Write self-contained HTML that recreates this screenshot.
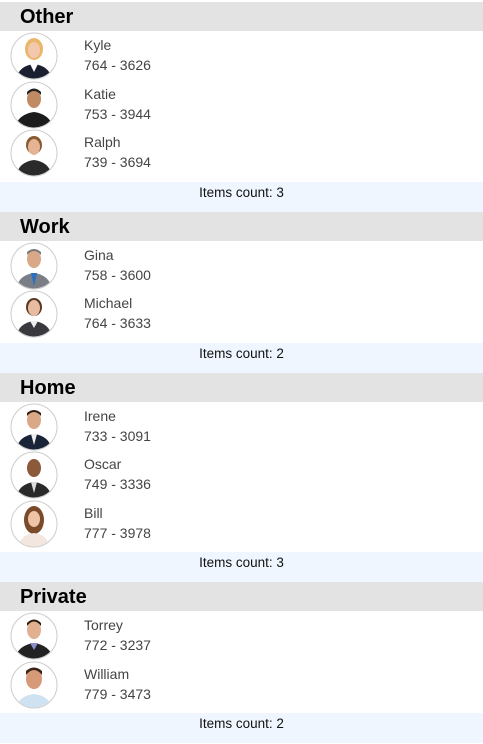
<!DOCTYPE html><html><head><style>
body{margin:0;width:483px;height:744px;overflow:hidden;background:#fff;font-family:"Segoe UI","Liberation Sans",sans-serif}
.top{height:2px}
.h{height:29px;background:#e3e3e3;font-weight:bold;font-size:20px;line-height:31px;padding-left:20px;color:#000}
.r{height:48.5px;position:relative}
.r svg{position:absolute;left:10px;top:1px}
.n{position:absolute;left:84px;top:4px;font-size:14px;line-height:20px;color:#444}
.g{height:5px}
.f{height:30px;background:#eff6ff;text-align:center;font-size:13.5px;line-height:22px;color:#111}
</style></head><body>
<div class="top"></div>
<div class="h">Other</div>
<div class="r"><svg width="48" height="48"><circle cx="24" cy="24" r="23" fill="#fff" stroke="#ccc"/><clipPath id="c"><circle cx="24" cy="24" r="22.5"/></clipPath><g clip-path="url(#c)"><ellipse cx="24" cy="17" rx="9" ry="11" fill="#e9b66a"/><ellipse cx="24" cy="18" rx="6" ry="8" fill="#f2c9ae"/><path d="M6 48 Q8 34 24 32 Q40 34 42 48Z" fill="#1b2030"/><path d="M20 32 L24 40 L28 32Z" fill="#fff"/></g></svg><div class="n">Kyle<br>764 - 3626</div></div>
<div class="r"><svg width="48" height="48"><circle cx="24" cy="24" r="23" fill="#fff" stroke="#ccc"/><g clip-path="url(#c)"><ellipse cx="24" cy="18" rx="7" ry="9" fill="#c08a62"/><path d="M17 14 Q24 6 31 14 L31 11 Q24 4 17 11Z" fill="#222"/><path d="M4 48 Q8 33 24 31 Q40 33 44 48Z" fill="#1c1c1c"/></g></svg><div class="n">Katie<br>753 - 3944</div></div>
<div class="r"><svg width="48" height="48"><circle cx="24" cy="24" r="23" fill="#fff" stroke="#ccc"/><g clip-path="url(#c)"><ellipse cx="24" cy="16" rx="8" ry="9" fill="#8a5a30"/><ellipse cx="24" cy="18" rx="6" ry="8" fill="#e4b494"/><path d="M6 48 Q8 33 24 31 Q40 33 42 48Z" fill="#2a2a2a"/></g></svg><div class="n">Ralph<br>739 - 3694</div></div>
<div class="g"></div><div class="f">Items count: 3</div>
<div class="h">Work</div>
<div class="r"><svg width="48" height="48"><circle cx="24" cy="24" r="23" fill="#fff" stroke="#ccc"/><g clip-path="url(#c)"><ellipse cx="24" cy="17" rx="7" ry="9" fill="#d8a888"/><path d="M17 13 Q24 5 31 13 L31 10 Q24 4 17 10Z" fill="#777"/><path d="M6 48 Q8 33 24 31 Q40 33 42 48Z" fill="#7a7e86"/><path d="M21 31 L24 44 L27 31Z" fill="#2a6fc0"/></g></svg><div class="n">Gina<br>758 - 3600</div></div>
<div class="r"><svg width="48" height="48"><circle cx="24" cy="24" r="23" fill="#fff" stroke="#ccc"/><g clip-path="url(#c)"><ellipse cx="24" cy="17" rx="8" ry="9" fill="#5a3a24"/><ellipse cx="24" cy="18" rx="6" ry="8" fill="#e8bca2"/><path d="M6 48 Q8 33 24 31 Q40 33 42 48Z" fill="#3a3a3e"/><path d="M20 31 L24 38 L28 31Z" fill="#eee"/></g></svg><div class="n">Michael<br>764 - 3633</div></div>
<div class="g"></div><div class="f">Items count: 2</div>
<div class="h">Home</div>
<div class="r"><svg width="48" height="48"><circle cx="24" cy="24" r="23" fill="#fff" stroke="#ccc"/><g clip-path="url(#c)"><ellipse cx="24" cy="17" rx="7" ry="9" fill="#d9a886"/><path d="M17 13 Q24 5 31 13 L31 10 Q24 4 17 10Z" fill="#2a1a10"/><path d="M6 48 Q8 33 24 31 Q40 33 42 48Z" fill="#1a2438"/><path d="M21 31 L24 42 L27 31Z" fill="#eee"/></g></svg><div class="n">Irene<br>733 - 3091</div></div>
<div class="r"><svg width="48" height="48"><circle cx="24" cy="24" r="23" fill="#fff" stroke="#ccc"/><g clip-path="url(#c)"><ellipse cx="24" cy="17" rx="7" ry="9" fill="#8a5a3a"/><path d="M6 48 Q8 33 24 31 Q40 33 42 48Z" fill="#2a2a2a"/><path d="M21 31 L24 42 L27 31Z" fill="#ddd"/></g></svg><div class="n">Oscar<br>749 - 3336</div></div>
<div class="r"><svg width="48" height="48"><circle cx="24" cy="24" r="23" fill="#fff" stroke="#ccc"/><g clip-path="url(#c)"><ellipse cx="24" cy="20" rx="10" ry="14" fill="#7a4a2a"/><ellipse cx="24" cy="19" rx="6" ry="8" fill="#efc4a6"/><path d="M8 48 Q10 35 24 33 Q38 35 40 48Z" fill="#f2e6de"/></g></svg><div class="n">Bill<br>777 - 3978</div></div>
<div class="g"></div><div class="f">Items count: 3</div>
<div class="h">Private</div>
<div class="r"><svg width="48" height="48"><circle cx="24" cy="24" r="23" fill="#fff" stroke="#ccc"/><g clip-path="url(#c)"><ellipse cx="24" cy="18" rx="7" ry="9" fill="#e0b090"/><path d="M17 14 Q24 5 31 14 L31 11 Q24 4 17 11Z" fill="#2a1a10"/><path d="M4 48 Q8 33 24 31 Q40 33 44 48Z" fill="#222"/><path d="M20 31 L24 38 L28 31Z" fill="#8a8fc8"/></g></svg><div class="n">Torrey<br>772 - 3237</div></div>
<div class="r"><svg width="48" height="48"><circle cx="24" cy="24" r="23" fill="#fff" stroke="#ccc"/><g clip-path="url(#c)"><ellipse cx="24" cy="18" rx="8" ry="10" fill="#d69a78"/><path d="M16 14 Q24 4 32 14 L32 10 Q24 3 16 10Z" fill="#3a2418"/><path d="M6 48 Q8 35 24 33 Q40 35 42 48Z" fill="#cfe2f2"/></g></svg><div class="n">William<br>779 - 3473</div></div>
<div class="g"></div><div class="f">Items count: 2</div>
</body></html>
